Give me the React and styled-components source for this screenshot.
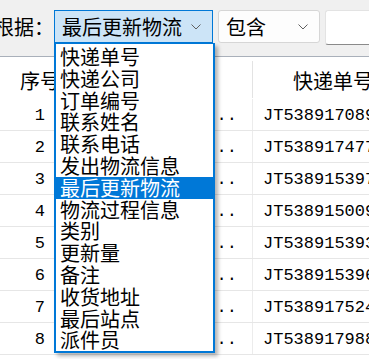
import React from "react";
import styled, { createGlobalStyle } from "styled-components";

const GlobalStyle = createGlobalStyle`
  html, body {
    margin: 0;
    padding: 0;
    background: #fff;
    overflow: hidden;
  }
  body {
    font-family: "Noto Sans CJK SC", "Liberation Sans", sans-serif;
  }
`;

const fields = [
  "快递单号",
  "快递公司",
  "订单编号",
  "联系姓名",
  "联系电话",
  "发出物流信息",
  "最后更新物流",
  "物流过程信息",
  "类别",
  "更新量",
  "备注",
  "收货地址",
  "最后站点",
  "派件员"
];

const rows = [
  ["1", "JT5389170895"],
  ["2", "JT5389174772"],
  ["3", "JT5389153971"],
  ["4", "JT5389150095"],
  ["5", "JT5389153933"],
  ["6", "JT5389153962"],
  ["7", "JT5389175244"],
  ["8", "JT5389179888"]
];

const Screen = styled.div`
  position: relative;
  width: 369px;
  height: 359px;
  overflow: hidden;
  background: #fff;
`;

const Toolbar = styled.div`
  display: flex;
  align-items: flex-start;
  gap: 5px;
  height: 57px;
  padding-top: 10px;
  box-sizing: border-box;
  background: #f0f0f0;
  border-bottom: 1px solid #a9b0ba;
`;

const Label = styled.div`
  margin-left: -6px;
  margin-right: -5px;
  width: 60px;
  height: 33px;
  line-height: 33px;
  font-size: 20px;
  color: #000;
  white-space: nowrap;
`;

const Combo = styled.div`
  display: flex;
  align-items: center;
  justify-content: space-between;
  box-sizing: border-box;
  width: ${p => p.width}px;
  height: 33px;
  padding: 0 11px 0 7px;
  font-size: 20px;
  color: #000;
  background: ${p => (p.open ? "#cce4f7" : "#fdfdfd")};
  border: 1px solid ${p => (p.open ? "#0078d7" : "#d6d6d6")};
  border-radius: ${p => (p.open ? 0 : 3)}px;
  white-space: nowrap;
`;

const Input = styled.div`
  flex: 1;
  height: 35px;
  box-sizing: border-box;
  background: #fff;
  border: 1px solid #e3e3e3;
  border-bottom: 1px solid #8a8a8a;
  border-right: none;
  border-radius: 3px 0 0 3px;
`;

const Chevron = () => (
  <svg width="10" height="6" viewBox="0 0 10 6">
    <path d="M0.5 0.5 L5 5 L9.5 0.5" fill="none" stroke="#606060" strokeWidth="1" />
  </svg>
);

const Dropdown = styled.div`
  position: absolute;
  left: 54px;
  top: 43px;
  width: 161px;
  height: 310px;
  box-sizing: border-box;
  padding-top: 2px;
  background: #fff;
  border: 2px solid #0078d7;
  border-top-width: 1px;
  box-shadow: 3px 3px 4px rgba(0, 0, 0, 0.3);
`;

const Option = styled.div`
  height: 21.8px;
  line-height: 21.8px;
  padding-left: 4px;
  font-size: 20px;
  white-space: nowrap;
  color: ${p => (p.selected ? "#fff" : "#000")};
  background: ${p => (p.selected ? "#0078d7" : "transparent")};
`;

const Grid = styled.div`
  display: flex;
  flex-direction: column;
`;

const Row = styled.div`
  display: grid;
  grid-template-columns: 55px 197px 1fr;
  height: ${p => (p.header ? 42 : 32)}px;
  border-bottom: 1px solid ${p => (p.header ? "transparent" : "#e6e6e6")};
  box-sizing: border-box;
`;

const HeadCell = styled.div`
  display: flex;
  align-items: center;
  font-size: 20px;
  color: #000;
  white-space: nowrap;
  padding-left: ${p => p.pad}px;
  padding-top: ${p => (p.line ? 2 : 6)}px;
  border-left: ${p => (p.line ? "1px solid #e3e3e3" : "none")};
  margin: ${p => (p.line ? "4px 0 0" : "0")};
  overflow: hidden;
`;

const Cell = styled.div`
  display: flex;
  align-items: center;
  justify-content: ${p => p.align || "flex-start"};
  font-family: "Liberation Mono", "DejaVu Sans Mono", monospace;
  font-size: 17px;
  color: #000;
  white-space: nowrap;
  overflow: hidden;
  padding: 1px ${p => p.padR || 0}px 0 ${p => p.padL || 0}px;
  border-left: ${p => (p.line ? "1px solid #ececec" : "none")};
`;

export default function App() {
  return (
    <Screen>
      <GlobalStyle />
      <Toolbar>
        <Label>根据：</Label>
        <Combo open width={159}>
          <span>最后更新物流</span>
          <Chevron />
        </Combo>
        <Combo width={102}>
          <span>包含</span>
          <Chevron />
        </Combo>
        <Input />
      </Toolbar>
      <Grid>
        <Row header>
          <HeadCell pad={20}>序号</HeadCell>
          <HeadCell />
          <HeadCell line pad={40}>快递单号</HeadCell>
        </Row>
        {rows.map(([n, code]) => (
          <Row key={n}>
            <Cell align="flex-end" padR={10}>{n}</Cell>
            <Cell align="flex-end" padR={15}>...</Cell>
            <Cell line padL={10}>{code}</Cell>
          </Row>
        ))}
      </Grid>
      <Dropdown>
        {fields.map(f => (
          <Option key={f} selected={f === "最后更新物流"}>
            {f}
          </Option>
        ))}
      </Dropdown>
    </Screen>
  );
}
